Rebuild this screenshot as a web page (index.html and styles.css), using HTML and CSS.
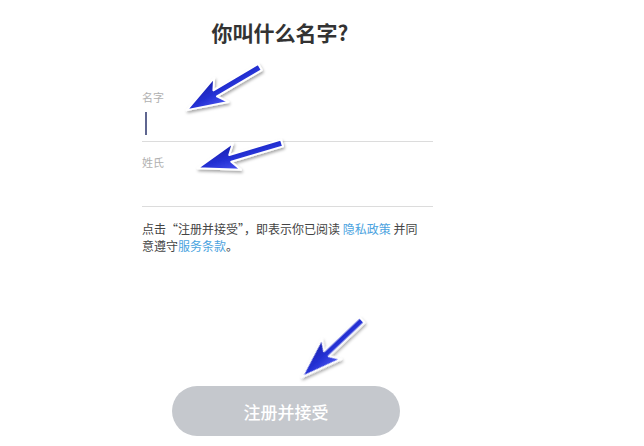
FILE: index.html
```html
<!DOCTYPE html>
<html lang="zh-CN">
<head>
<meta charset="utf-8">
<title>你叫什么名字?</title>
<link rel="stylesheet" href="styles.css">
</head>
<body>
<main class="page">
  <h1 class="title">你叫什么名字?</h1>
  <div class="field">
    <label class="field-label">名字</label>
    <div class="field-input"><span class="cursor"></span></div>
  </div>
  <div class="field">
    <label class="field-label">姓氏</label>
    <div class="field-input"></div>
  </div>
  <p class="terms"><span class="terms-line">点击“注册并接受”，即表示你已阅读 <a class="link">隐私政策</a> 并同</span><span class="terms-line">意遵守<a class="link">服务条款</a>。</span></p>
  <button class="submit">注册并接受</button>
</main>
<svg class="arrows" width="644" height="446" viewBox="0 0 644 446" xmlns="http://www.w3.org/2000/svg">
  <defs>
    <filter id="sh" x="-30%" y="-30%" width="160%" height="160%">
      <feDropShadow dx="1" dy="2" stdDeviation="1.6" flood-color="#000" flood-opacity="0.35"/>
    </filter>
    <linearGradient id="bl" x1="0" y1="0" x2="0" y2="1">
      <stop offset="0" stop-color="#4a55f0"/>
      <stop offset="0.5" stop-color="#2430d4"/>
      <stop offset="1" stop-color="#1a22b0"/>
    </linearGradient>
  </defs>
  <g filter="url(#sh)" fill="url(#bl)" stroke="#fff" stroke-width="2" stroke-linejoin="round">
    <polygon transform="translate(260,67) rotate(149.5)" points="0,-3.5 52,-3.5 45,-14 85,0 45,14 52,3.5 0,3.5"/>
    <polygon transform="translate(282,143) rotate(163.4)" points="0,-3.5 54,-3.5 47,-14 88,0 47,14 54,3.5 0,3.5"/>
    <polygon transform="translate(362,320) rotate(136.5)" points="0,-3.5 49,-3.5 42,-14 83,0 42,14 49,3.5 0,3.5"/>
  </g>
</svg>
</body>
</html>
```

FILE: styles.css
```css
html, body {
  margin: 0;
  padding: 0;
  background: #ffffff;
}

body {
  width: 644px;
  height: 446px;
  position: relative;
  overflow: hidden;
  font-family: "Noto Sans CJK SC", "Noto Sans", "Liberation Sans", sans-serif;
}

.page {
  width: 291px;
  margin-left: 142px;
  padding-top: 18px;
  display: flex;
  flex-direction: column;
}

.title {
  margin: 0;
  padding-right: 15px;
  text-align: center;
  font-size: 21px;
  line-height: 28px;
  font-weight: 700;
  color: #333333;
}

.field {
  display: flex;
  flex-direction: column;
}

.field:first-of-type {
  margin-top: 43px;
}

.field + .field {
  margin-top: 12px;
}

.field-label {
  font-size: 11px;
  line-height: 16px;
  color: #b0b0b0;
}

.field-input {
  height: 36px;
  border-bottom: 1px solid #dcdcdc;
  display: flex;
  align-items: flex-start;
}

.cursor {
  display: block;
  width: 2px;
  height: 23px;
  margin-top: 7px;
  margin-left: 3px;
  background: #5f6690;
}

.terms {
  margin: 13px 0 0;
  font-size: 12px;
  line-height: 17px;
  color: #444;
  display: flex;
  flex-direction: column;
}

.terms-line {
  display: block;
  white-space: nowrap;
}

.link {
  color: #4ba3e0;
}

.submit {
  margin-top: 132px;
  margin-left: 30px;
  width: 228px;
  height: 50px;
  border: none;
  border-radius: 25px;
  background: #c5c8cd;
  color: #ffffff;
  font-family: "Noto Sans CJK SC", "Noto Sans", sans-serif;
  font-size: 17px;
  font-weight: 500;
  padding: 0;
}

.arrows {
  position: absolute;
  left: 0;
  top: 0;
  pointer-events: none;
}
```
